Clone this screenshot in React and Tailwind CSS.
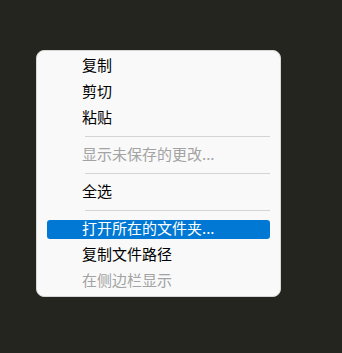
import React from "react";

const items = [
  { label: "复制" },
  { label: "剪切" },
  { label: "粘贴" },
  { sep: true },
  { label: "显示未保存的更改...", disabled: true },
  { sep: true },
  { label: "全选" },
  { sep: true },
  { label: "打开所在的文件夹...", active: true },
  { label: "复制文件路径" },
  { label: "在侧边栏显示", disabled: true },
];

const App = () => {
  return (
    <div
      className="w-[342px] h-[353px] bg-[#25251f] pt-[50px] pl-[36px]"
      style={{ fontFamily: '"Noto Sans CJK SC", "Noto Sans", sans-serif' }}
    >
      <div className="w-[245px] h-[247px] bg-[#f9f9f9] rounded-[8px] border border-[#d6d6d6] px-[10px] pt-[2px] pb-[2px] flex flex-col">
        {items.map((item, idx) =>
          item.sep ? (
            <div key={idx} className="h-[11px] flex items-center pl-[38px]">
              <div className="h-px w-full bg-[#d4d4d4]" />
            </div>
          ) : (
            <div key={idx} className="h-[26px] flex items-center">
              <div
                className={`h-[19px] w-full rounded-[3px] flex items-center pl-[35px] pb-[4px] text-[15px] leading-none ${
                  item.active
                    ? "bg-[#0078d4] text-white"
                    : item.disabled
                    ? "text-[#a3a3a3]"
                    : "text-black"
                }`}
              >
                {item.label}
              </div>
            </div>
          )
        )}
      </div>
    </div>
  );
};

export default App;
